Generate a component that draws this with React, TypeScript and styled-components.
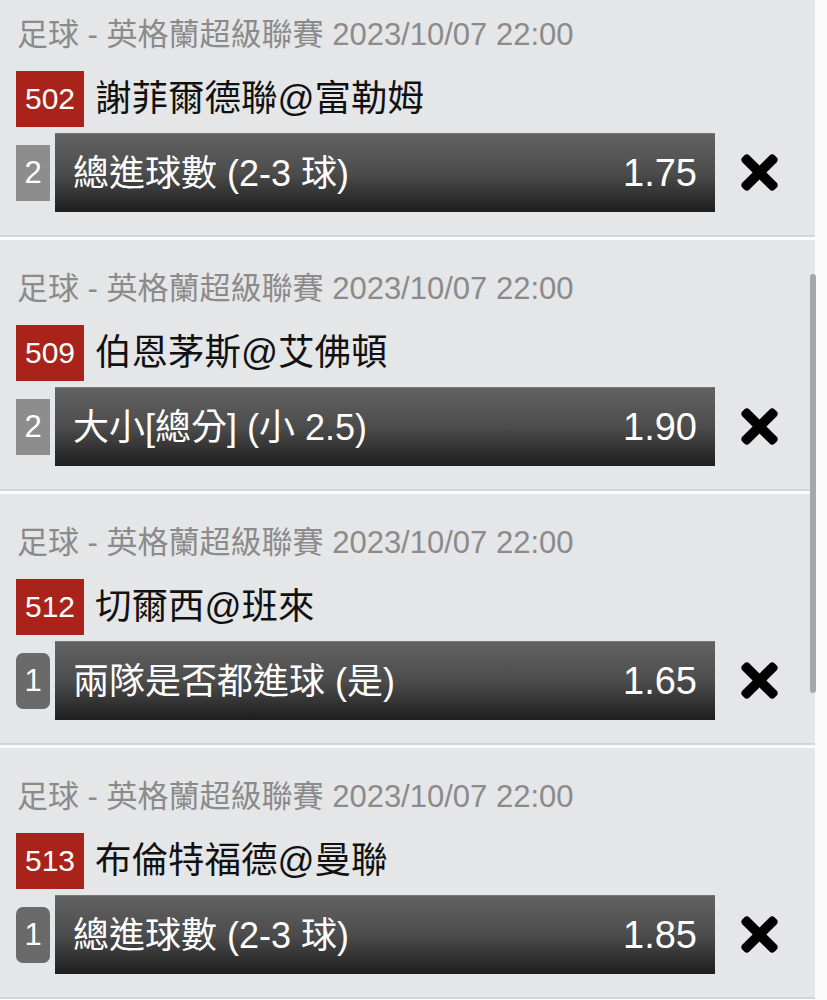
import React, { FC } from 'react'
import styled, { createGlobalStyle } from 'styled-components'
import { FaTimes } from 'react-icons/fa'

const GlobalStyle = createGlobalStyle`
  html, body {
    margin: 0;
    padding: 0;
    background: #fbfbfb;
    overflow: hidden;
  }
  body {
    font-family: "Liberation Sans", "Noto Sans CJK TC", sans-serif;
  }
`

const Page = styled.div`
  position: relative;
  width: 827px;
  height: 1000px;
  overflow: hidden;
`

const List = styled.div`
  display: flex;
  flex-direction: column;
  gap: 3px;
  width: 815px;
  margin-top: -14px;
`

const Card = styled.div`
  height: 249px;
  background: #e5e6e8;
  border-bottom: 2px solid #d3d4d6;
  display: flex;
  flex-direction: column;
`

const Header = styled.div`
  margin: 31px 0 0 17px;
  height: 36px;
  line-height: 36px;
  font-size: 31px;
  color: #8b8b8b;
  white-space: nowrap;
`

const TitleRow = styled.div`
  display: flex;
  align-items: center;
  margin: 18px 0 0 16px;
  height: 56px;
`

const MatchNo = styled.div`
  width: 68px;
  height: 56px;
  background: #a9231a;
  color: #fff;
  font-size: 30px;
  display: flex;
  align-items: center;
  justify-content: center;
`

const Teams = styled.div`
  margin: 0 0 8px 11px;
  font-size: 36.5px;
  color: #111;
  white-space: nowrap;
`

const BetRow = styled.div`
  display: flex;
  align-items: center;
  margin: 6px 0 0 16px;
  height: 79px;
`

const Leg = styled.div<{ $rounded: boolean }>`
  width: 34px;
  height: 56px;
  background: ${p => (p.$rounded ? '#6a6a6a' : '#8d8d8d')};
  border-radius: ${p => (p.$rounded ? '7px' : '0')};
  color: #fff;
  font-size: 31px;
  display: flex;
  align-items: center;
  justify-content: center;
`

const Selection = styled.div`
  margin-left: 5px;
  width: 660px;
  height: 79px;
  box-sizing: border-box;
  padding: 0 18px 0 18px;
  background: linear-gradient(to bottom, #626262 0%, #4c4c4c 50%, #1e1e1e 100%);
  border-top: 1px solid #777;
  display: flex;
  align-items: center;
  justify-content: space-between;
  color: #fff;
`

const Market = styled.span`
  margin-bottom: 7px;
  font-size: 36px;
  white-space: nowrap;
`

const Odds = styled.span`
  font-size: 38px;
`

const Remove = styled.button`
  margin-left: 26px;
  width: 37px;
  height: 53px;
  padding: 0;
  border: none;
  background: none;
  color: #000;
  display: flex;
  align-items: center;
  justify-content: center;
  cursor: pointer;
`

const ScrollThumb = styled.div`
  position: absolute;
  top: 274px;
  left: 810px;
  width: 6px;
  height: 419px;
  border-radius: 3px;
  background: #a7a7a9;
`

interface Bet {
  no: string
  teams: string
  leg: number
  market: string
  odds: string
}

const bets: Bet[] = [
  { no: '502', teams: '謝菲爾德聯@富勒姆', leg: 2, market: '總進球數 (2-3 球)', odds: '1.75' },
  { no: '509', teams: '伯恩茅斯@艾佛頓', leg: 2, market: '大小[總分] (小 2.5)', odds: '1.90' },
  { no: '512', teams: '切爾西@班來', leg: 1, market: '兩隊是否都進球 (是)', odds: '1.65' },
  { no: '513', teams: '布倫特福德@曼聯', leg: 1, market: '總進球數 (2-3 球)', odds: '1.85' },
]

const BetCard: FC<{ bet: Bet }> = ({ bet }) => (
  <Card>
    <Header>足球 - 英格蘭超級聯賽 2023/10/07 22:00</Header>
    <TitleRow>
      <MatchNo>{bet.no}</MatchNo>
      <Teams>{bet.teams}</Teams>
    </TitleRow>
    <BetRow>
      <Leg $rounded={bet.leg === 1}>{bet.leg}</Leg>
      <Selection>
        <Market>{bet.market}</Market>
        <Odds>{bet.odds}</Odds>
      </Selection>
      <Remove aria-label="remove">
        <FaTimes size={53} />
      </Remove>
    </BetRow>
  </Card>
)

const App: FC = () => (
  <Page>
    <GlobalStyle />
    <List>
      {bets.map(bet => (
        <BetCard key={bet.no} bet={bet} />
      ))}
    </List>
    <ScrollThumb />
  </Page>
)

export default App
